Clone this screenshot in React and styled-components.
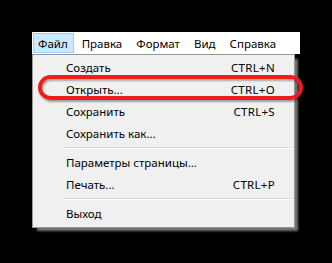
import React from "react";
import styled, { createGlobalStyle } from "styled-components";

const GlobalStyle = createGlobalStyle`
  html, body {
    margin: 0;
    padding: 0;
    background: #000;
  }
  body {
    width: 332px;
    height: 263px;
    overflow: hidden;
    font-family: "Noto Sans", "Open Sans", sans-serif;
    font-size: 11.5px;
    color: #000;
  }
`;

const Stage = styled.div`
  position: relative;
  padding: 32px 0 0 32px;
`;

const Window = styled.div`
  width: 268px;
`;

const MenuBar = styled.div`
  display: flex;
  align-items: center;
  height: 22px;
  background: #fff;
  padding-left: 1px;
`;

const MenuItem = styled.div`
  height: 20px;
  line-height: 19px;
  padding: 0 5px 0 ${(p) => (p.$active ? 4 : 5)}px;
  margin-right: 2px;
  background: ${(p) => (p.$active ? "#cce8ff" : "transparent")};
  border: 1px solid ${(p) => (p.$active ? "#99d1ff" : "transparent")};
  box-sizing: border-box;
  white-space: nowrap;
`;

const Dropdown = styled.div`
  width: 263px;
  box-sizing: border-box;
  background: #f0f0f0;
  border: 1px solid #979797;
  padding: 1px 0 3px;
  box-shadow: 4px 4px 2px -1px rgba(128, 128, 128, 0.9);
`;

const Row = styled.div`
  display: flex;
  justify-content: space-between;
  align-items: center;
  height: 22px;
  padding: 0 19px 0 33px;
  white-space: nowrap;
`;

const Shortcut = styled.span`
  letter-spacing: 0.3px;
`;

const Separator = styled.div`
  height: 7px;
  display: flex;
  align-items: center;
  padding-left: 30px;

  &::after {
    content: "";
    flex: 1;
    height: 1px;
    background: #d7d7d7;
    border-bottom: 1px solid #fff;
  }
`;

const Highlight = styled.div`
  position: absolute;
  left: 38px;
  top: 75px;
  width: 265px;
  height: 25px;
  box-sizing: border-box;
  border: 4px solid #ee1c1c;
  border-radius: 13px;
  box-shadow: 1px 2px 2px rgba(0, 0, 0, 0.35),
    inset 1px 2px 2px rgba(0, 0, 0, 0.3);
`;

const items = [
  ["Создать", "CTRL+N"],
  ["Открыть...", "CTRL+O"],
  ["Сохранить", "CTRL+S"],
  ["Сохранить как...", ""],
  "sep",
  ["Параметры страницы...", ""],
  ["Печать...", "CTRL+P"],
  "sep",
  ["Выход", ""],
];

export default function App() {
  return (
    <Stage>
      <GlobalStyle />
      <Window>
        <MenuBar>
          <MenuItem $active>Файл</MenuItem>
          <MenuItem>Правка</MenuItem>
          <MenuItem>Формат</MenuItem>
          <MenuItem>Вид</MenuItem>
          <MenuItem>Справка</MenuItem>
        </MenuBar>
        <Dropdown>
          {items.map((it, i) =>
            it === "sep" ? (
              <Separator key={i} />
            ) : (
              <Row key={i}>
                <span>{it[0]}</span>
                <Shortcut>{it[1]}</Shortcut>
              </Row>
            )
          )}
        </Dropdown>
      </Window>
      <Highlight />
    </Stage>
  );
}
